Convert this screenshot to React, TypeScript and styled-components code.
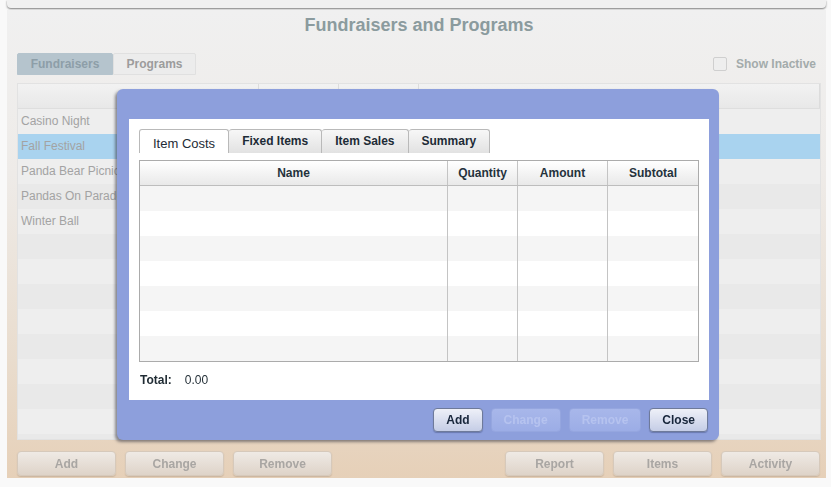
import React from "react";
import styled, { createGlobalStyle } from "styled-components";

const GlobalStyle = createGlobalStyle`
	html, body {
		margin: 0;
		padding: 0;
		background: #f8f8f8;
	}
	* {
		box-sizing: border-box;
	}
`;

const fundraisers = [
	"Casino Night",
	"Fall Festival",
	"Panda Bear Picnic",
	"Pandas On Parade",
	"Winter Ball",
];

const costTabs = ["Item Costs", "Fixed Items", "Item Sales", "Summary"];
const costColumns = ["Name", "Quantity", "Amount", "Subtotal"];

export default function App() {
	const bgRows = Array.from({ length: 14 }, (_, i) => fundraisers[i] ?? "");
	return (
		<>
			<GlobalStyle />
			<Screen>
				<Backdrop>
					<TopBar />
					<Panel>
						<Title>Fundraisers and Programs</Title>
						<TabRow>
							<PageTabs>
								<PageTab active>Fundraisers</PageTab>
								<PageTab>Programs</PageTab>
							</PageTabs>
							<InactiveToggle>
								<CheckBox />
								Show Inactive
							</InactiveToggle>
						</TabRow>
						<BgTable>
							<BgHeader>
								<BgHeadCell />
								<BgHeadCell />
								<BgHeadCell />
								<BgHeadCell />
							</BgHeader>
							{bgRows.map((name, i) => (
								<BgRow key={i} selected={i === 1} odd={i % 2 === 1}>
									{name}
								</BgRow>
							))}
						</BgTable>
						<ActionBar>
							<ActionGroup>
								<ActionButton>Add</ActionButton>
								<ActionButton>Change</ActionButton>
								<ActionButton>Remove</ActionButton>
							</ActionGroup>
							<ActionGroup>
								<ActionButton>Report</ActionButton>
								<ActionButton>Items</ActionButton>
								<ActionButton>Activity</ActionButton>
							</ActionGroup>
						</ActionBar>
					</Panel>
				</Backdrop>

				<Modal>
					<ModalBody>
						<CostTabs>
							{costTabs.map((t, i) => (
								<CostTab key={t} active={i === 0}>
									{t}
								</CostTab>
							))}
						</CostTabs>
						<CostTable>
							<CostHeader>
								{costColumns.map((c) => (
									<CostHeadCell key={c}>{c}</CostHeadCell>
								))}
							</CostHeader>
							{Array.from({ length: 7 }, (_, i) => (
								<CostRow key={i} odd={i % 2 === 1}>
									<CostCell />
									<CostCell />
									<CostCell />
									<CostCell />
								</CostRow>
							))}
						</CostTable>
						<TotalRow>
							<TotalLabel>Total:</TotalLabel>
							<span>0.00</span>
						</TotalRow>
					</ModalBody>
					<ModalFooter>
						<DialogButton>Add</DialogButton>
						<DialogButton disabled>Change</DialogButton>
						<DialogButton disabled>Remove</DialogButton>
						<DialogButton>Close</DialogButton>
					</ModalFooter>
				</Modal>
			</Screen>
		</>
	);
}

const Screen = styled.div`
	position: relative;
	width: 831px;
	height: 487px;
	overflow: hidden;
	background: #f9f9f9;
	font-family: "Liberation Sans", Arial, sans-serif;
	font-size: 12px;
`;

const Backdrop = styled.div`
	height: 100%;
	padding: 0 5px 9px 7px;
	display: flex;
	flex-direction: column;
	filter: blur(0.7px);
`;

const TopBar = styled.div`
	height: 8px;
	flex-shrink: 0;
	background: #f0f0f0;
	border-radius: 0 0 4px 4px;
	box-shadow: 0 1px 2px rgba(0, 0, 0, 0.5);
`;

const Panel = styled.div`
	flex: 1;
	margin-top: 2px;
	padding: 0 5px 0 10px;
	display: flex;
	flex-direction: column;
	background: linear-gradient(#f0f0f0 0%, #eeebe8 35%, #e9dccd 75%, #e6d0b8 100%);
`;

const Title = styled.div`
	height: 31px;
	line-height: 31px;
	text-align: center;
	font-size: 18px;
	font-weight: bold;
	color: #8b9b9e;
`;

const TabRow = styled.div`
	margin-top: 12px;
	height: 22px;
	display: flex;
	align-items: center;
	justify-content: space-between;
`;

const PageTabs = styled.div`
	display: flex;
	height: 100%;
`;

const PageTab = styled.div<{ active?: boolean }>`
	width: ${(p) => (p.active ? "96px" : "83px")};
	display: flex;
	align-items: center;
	justify-content: center;
	font-weight: bold;
	color: ${(p) => (p.active ? "#8d9ea8" : "#9c9c9c")};
	background: ${(p) => (p.active ? "#b5c4cd" : "#ececec")};
	border: 1px solid ${(p) => (p.active ? "#b5c4cd" : "#e0e0e0")};
	border-radius: 2px 2px 0 0;
`;

const InactiveToggle = styled.label`
	display: flex;
	align-items: center;
	gap: 9px;
	margin-right: 5px;
	font-weight: bold;
	color: #a3abab;
`;

const CheckBox = styled.span`
	width: 14px;
	height: 14px;
	border: 1px solid #cfcfcf;
	border-radius: 2px;
	background: #eeeeee;
`;

const BgTable = styled.div`
	margin-top: 8px;
	height: 357px;
	overflow: hidden;
	background: #ededed;
	border: 1px solid #e2e2e2;
`;

const BgHeader = styled.div`
	height: 25px;
	display: grid;
	grid-template-columns: 241px 80px 80px 1fr;
	background: linear-gradient(#f2f2f2, #e8e8e8);
	border-bottom: 1px solid #dedede;
`;

const BgHeadCell = styled.div`
	border-right: 1px solid #dcdcdc;
`;

const BgRow = styled.div<{ selected?: boolean; odd?: boolean }>`
	height: 25px;
	line-height: 25px;
	padding-left: 3px;
	color: #a3a3a3;
	white-space: nowrap;
	background: ${(p) => (p.selected ? "#a9d3ef" : p.odd ? "#e9e9e9" : "#eeeeee")};
`;

const ActionBar = styled.div`
	margin-top: 11px;
	padding-right: 1px;
	display: flex;
	justify-content: space-between;
`;

const ActionGroup = styled.div`
	display: flex;
	gap: 9px;
`;

const ActionButton = styled.div`
	width: 99px;
	height: 25px;
	display: flex;
	align-items: center;
	justify-content: center;
	font-weight: bold;
	color: #a9a6a3;
	background: linear-gradient(#efeae5, #ded3c8);
	border: 1px solid #d6c9bb;
	border-radius: 4px;
	box-shadow: 0 1px 1px rgba(120, 100, 80, 0.25);
`;

const Modal = styled.div`
	position: absolute;
	left: 117px;
	top: 89px;
	width: 602px;
	height: 351px;
	padding: 30px 10px 0 12px;
	display: flex;
	flex-direction: column;
	background: #8d9fdc;
	border-radius: 6px;
	box-shadow: -2px 2px 3px rgba(50, 50, 60, 0.55);
`;

const ModalBody = styled.div`
	height: 281px;
	padding: 10px;
	background: #ffffff;
	display: flex;
	flex-direction: column;
`;

const CostTabs = styled.div`
	display: flex;
	height: 24px;
`;

const CostTab = styled.div<{ active?: boolean }>`
	padding: ${(p) => (p.active ? "3px 13px 0" : "0 13px 2px")};
	display: flex;
	align-items: center;
	color: #1d2b36;
	font-weight: ${(p) => (p.active ? "normal" : "bold")};
	font-size: ${(p) => (p.active ? "13px" : "12px")};
	background: ${(p) => (p.active ? "#ffffff" : "linear-gradient(#f7f7f7, #e2e2e2)")};
	border: 1px solid #b9b9b9;
	border-bottom: none;
	border-left-width: ${(p) => (p.active ? "1px" : "0")};
	border-radius: 3px 3px 0 0;
`;

const CostTable = styled.div`
	margin-top: 7px;
	width: 560px;
	height: 202px;
	border: 1px solid #ababab;
	overflow: hidden;
`;

const columns = "308px 70px 90px 1fr";

const CostHeader = styled.div`
	height: 25px;
	display: grid;
	grid-template-columns: ${columns};
	background: linear-gradient(#ffffff, #e9e9e9);
	border-bottom: 1px solid #bdbdbd;
`;

const CostHeadCell = styled.div`
	display: flex;
	align-items: center;
	justify-content: center;
	font-weight: bold;
	color: #24323c;
	border-right: 1px solid #c4c4c4;
	&:last-child {
		border-right: none;
	}
`;

const CostRow = styled.div<{ odd?: boolean }>`
	height: 25px;
	display: grid;
	grid-template-columns: ${columns};
	background: ${(p) => (p.odd ? "#ffffff" : "#f5f5f5")};
`;

const CostCell = styled.div`
	border-right: 1px solid #c4c4c4;
	&:last-child {
		border-right: none;
	}
`;

const TotalRow = styled.div`
	padding: 11px 0 0 1px;
	display: flex;
	gap: 13px;
	line-height: 14px;
	color: #1f2b33;
`;

const TotalLabel = styled.span`
	font-weight: bold;
`;

const ModalFooter = styled.div`
	flex: 1;
	padding-right: 1px;
	display: flex;
	align-items: center;
	justify-content: flex-end;
	gap: 8px;
`;

const DialogButton = styled.button`
	height: 24px;
	padding: 0 12px;
	font-family: inherit;
	font-size: 12px;
	font-weight: bold;
	color: ${(p) => (p.disabled ? "#b6c3ef" : "#17253a")};
	background: ${(p) =>
		p.disabled
			? "linear-gradient(#a8b7ea, #9cade6)"
			: "linear-gradient(#eef0f8, #c5cde6)"};
	border: 1px solid ${(p) => (p.disabled ? "#95a6df" : "#6e7a9a")};
	border-radius: 4px;
	box-shadow: ${(p) => (p.disabled ? "none" : "0 1px 1px rgba(40, 50, 90, 0.35)")};
`;
